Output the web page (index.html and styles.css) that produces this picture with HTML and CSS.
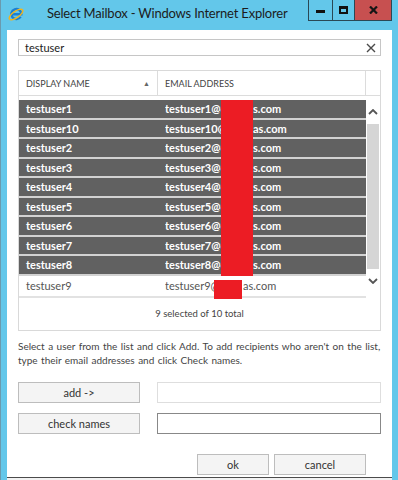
FILE: index.html
```html
<!DOCTYPE html>
<html lang="en">
  <head>
    <meta charset="UTF-8" />
    <title>Select Mailbox - Windows Internet Explorer</title>
    <link rel="stylesheet" href="styles.css">
  </head>
  <body>
    <div class="window">
      <header class="titlebar">
        <svg class="ie-logo" viewBox="0 0 16 16" width="16" height="16">
          <path d="M12.6 10.6 A5 5 0 1 1 13.3 8.2 L4.4 8.2" fill="none" stroke="#1b7fd4" stroke-width="2.4"/>
          <ellipse cx="8" cy="8.5" rx="8" ry="3.2" transform="rotate(-35 8 8.5)" fill="none" stroke="#f0b51e" stroke-width="1.4"/>
        </svg>
        <span class="title">Select Mailbox - Windows Internet Explorer</span>
        <div class="controls">
          <div class="ctl min"><span></span></div>
          <div class="ctl max"><span></span></div>
          <div class="ctl close">
            <svg viewBox="0 0 9 8" width="9" height="8">
              <path d="M1 0.5 L8 7.5 M8 0.5 L1 7.5" stroke="#151515" stroke-width="2.2"/>
            </svg>
          </div>
        </div>
      </header>

      <main class="content">
        <div class="search">
          <span>testuser</span>
          <svg class="clear" viewBox="0 0 10 10" width="10" height="10">
            <path d="M1 1 L9 9 M9 1 L1 9" stroke="#4a4a4a" stroke-width="1.4"/>
          </svg>
        </div>

        <div class="grid">
          <div class="grid-head">
            <div class="col-name">DISPLAY NAME <span class="sort">&#9650;</span></div>
            <div class="col-mail">EMAIL ADDRESS</div>
            <div class="col-scroll"></div>
          </div>
          <div class="grid-body">
            <div class="rows">
              <div class="row"><span class="c-name">testuser1</span><span class="c-mail"><span class="local">testuser1@8</span>s.com</span></div>
              <div class="row"><span class="c-name">testuser10</span><span class="c-mail"><span class="local">testuser10@8</span>as.com</span></div>
              <div class="row"><span class="c-name">testuser2</span><span class="c-mail"><span class="local">testuser2@8</span>s.com</span></div>
              <div class="row"><span class="c-name">testuser3</span><span class="c-mail"><span class="local">testuser3@8</span>s.com</span></div>
              <div class="row"><span class="c-name">testuser4</span><span class="c-mail"><span class="local">testuser4@8</span>s.com</span></div>
              <div class="row"><span class="c-name">testuser5</span><span class="c-mail"><span class="local">testuser5@8</span>s.com</span></div>
              <div class="row"><span class="c-name">testuser6</span><span class="c-mail"><span class="local">testuser6@8</span>s.com</span></div>
              <div class="row"><span class="c-name">testuser7</span><span class="c-mail"><span class="local">testuser7@8</span>s.com</span></div>
              <div class="row"><span class="c-name">testuser8</span><span class="c-mail"><span class="local">testuser8@8</span>s.com</span></div>
              <div class="row plain"><span class="c-name">testuser9</span><span class="c-mail"><span class="local short">testuser9@8</span>as.com</span></div>
            </div>
            <div class="scrollbar">
              <div class="arrow up">
                <svg viewBox="0 0 10 6" width="10" height="6"><path d="M1 5 L5 1 L9 5" fill="none" stroke="#555" stroke-width="1.8"/></svg>
              </div>
              <div class="thumb"></div>
              <div class="arrow down">
                <svg viewBox="0 0 10 6" width="10" height="6"><path d="M1 1 L5 5 L9 1" fill="none" stroke="#555" stroke-width="1.8"/></svg>
              </div>
            </div>
          </div>
          <div class="grid-foot">9 selected of 10 total</div>

          <!-- redacted parts of the addresses -->
          <div class="redact big"></div>
          <div class="redact small"></div>
        </div>

        <p class="hint">Select a user from the list and click Add. To add recipients who aren't on the list, type their email addresses and click Check names.</p>

        <div class="field-row">
          <button>add -&gt;</button>
          <input class="field disabled" type="text" />
        </div>
        <div class="field-row">
          <button>check names</button>
          <input class="field" type="text" />
        </div>

        <div class="actions">
          <button class="ok">ok</button>
          <button class="cancel">cancel</button>
        </div>
      </main>
      <div class="statusline"></div>
    </div>
  </body>
</html>
```

FILE: styles.css
```css
* {
  box-sizing: border-box;
}

body {
  margin: 0;
  font-family: Lato, "Open Sans", sans-serif;
  color: #444;
}

.window {
  height: 480px;
  background: #63c7ea;
  border-left: 1px solid #6a9aae;
  padding: 0 6px 0 6px;
  display: flex;
  flex-direction: column;
}

/* title bar */
.titlebar {
  height: 30px;
  flex-shrink: 0;
  display: flex;
  align-items: flex-start;
}

.ie-logo {
  flex-shrink: 0;
  margin: 6px 0 0 1px;
}

.title {
  margin: 5px 0 0 23px;
  font-size: 13px;
  letter-spacing: -0.2px;
  color: #1c1c1c;
  white-space: nowrap;
}

.controls {
  flex-shrink: 0;
  margin-left: auto;
  display: flex;
}

.ctl {
  height: 21px;
  border: 1px solid #2a4855;
  border-top: none;
  display: flex;
  align-items: center;
  justify-content: center;
}

.ctl.min {
  width: 25px;
}
.ctl.min span {
  width: 9px;
  height: 3px;
  margin-top: 3px;
  background: #111;
}

.ctl.max {
  width: 22px;
  border-left: none;
}
.ctl.max span {
  width: 9px;
  height: 8px;
  border: 2px solid #111;
  border-top-width: 3px;
}

.ctl.close {
  width: 37px;
  border-left: none;
  background: #c75050;
}

/* content */
.content {
  flex: 1;
  background: #fff;
  padding: 9px 11px 0 11px;
  display: flex;
  flex-direction: column;
}

.statusline {
  height: 3px;
  flex-shrink: 0;
  background: #f2f2f2;
  border-top: 1px solid #4b4b4b;
}

.search {
  height: 17px;
  border: 1px solid #c6c6c6;
  display: flex;
  align-items: center;
  padding: 0 4px 0 6px;
  font-size: 11px;
  color: #222;
}
.search .clear {
  margin-left: auto;
}

/* grid */
.grid {
  margin-top: 14px;
  border: 1px solid #d9d9d9;
  position: relative;
}

.grid-head {
  display: flex;
  height: 25px;
  border-bottom: 1px solid #dcdcdc;
  font-size: 9px;
  color: #444;
}
.grid-head div {
  display: flex;
  align-items: center;
}
.col-name {
  width: 139px;
  padding: 0 7px;
  border-right: 1px solid #dcdcdc;
}
.col-name .sort {
  margin-left: auto;
  font-size: 7px;
  color: #666;
}
.col-mail {
  flex: 1;
  padding-left: 7px;
  border-right: 1px solid #dcdcdc;
}
.col-scroll {
  width: 14px;
}

.grid-body {
  display: flex;
  padding-top: 4px;
}
.rows {
  flex: 1;
}

.row {
  display: flex;
  align-items: center;
  height: 19.5px;
  border-bottom: 2px solid #d2d2d2;
  background: #616161;
  color: #fff;
  font-weight: bold;
  font-size: 11px;
  white-space: nowrap;
}
.row.plain {
  height: 22px;
  background: none;
  color: #555;
  font-weight: normal;
  border-bottom-color: #e2e2e2;
}
.c-name {
  width: 139px;
  padding-left: 7px;
}
.c-mail {
  padding-left: 7px;
}
.local {
  display: inline-block;
  width: 88px;
  overflow: hidden;
  vertical-align: bottom;
}
.local.short {
  width: 78px;
}

.scrollbar {
  width: 14px;
  display: flex;
  flex-direction: column;
}
.arrow {
  display: flex;
  justify-content: center;
}
.arrow.up {
  height: 24px;
  align-items: center;
}
.arrow.down {
  flex: 1;
  padding-top: 9px;
}
.thumb {
  height: 145px;
  margin: 0 1px;
  background: #d5d5d5;
}

.grid-foot {
  height: 32px;
  display: flex;
  align-items: center;
  justify-content: center;
  font-size: 9.5px;
  color: #444;
}

.redact {
  position: absolute;
  background: #ec1c24;
}
.redact.big {
  left: 202px;
  top: 29px;
  width: 32px;
  height: 176px;
}
.redact.small {
  left: 195px;
  top: 209px;
  width: 28px;
  height: 19px;
}

.hint {
  margin: 8px 0 0 0;
  font-size: 10px;
  word-spacing: 0.9px;
  line-height: 14px;
  color: #444;
}

.field-row {
  display: flex;
  gap: 17px;
  height: 21px;
  margin-top: 15px;
}
.field-row + .field-row {
  margin-top: 10px;
}

button {
  font-family: Lato, "Open Sans", sans-serif;
  font-size: 11px;
  color: #333;
  background: #f4f4f4;
  border: 1px solid #bdbdbd;
  padding: 0;
  height: 21px;
}
.field-row button {
  width: 122px;
}

.field {
  flex: 1;
  height: 21px;
  border: 1px solid #888;
  background: #fff;
}
.field.disabled {
  border-color: #dedede;
}

.actions {
  display: flex;
  justify-content: flex-end;
  gap: 5px;
  margin-top: 20px;
  padding-right: 15px;
}
.actions .ok {
  width: 72px;
}
.actions .cancel {
  width: 92px;
}
```
